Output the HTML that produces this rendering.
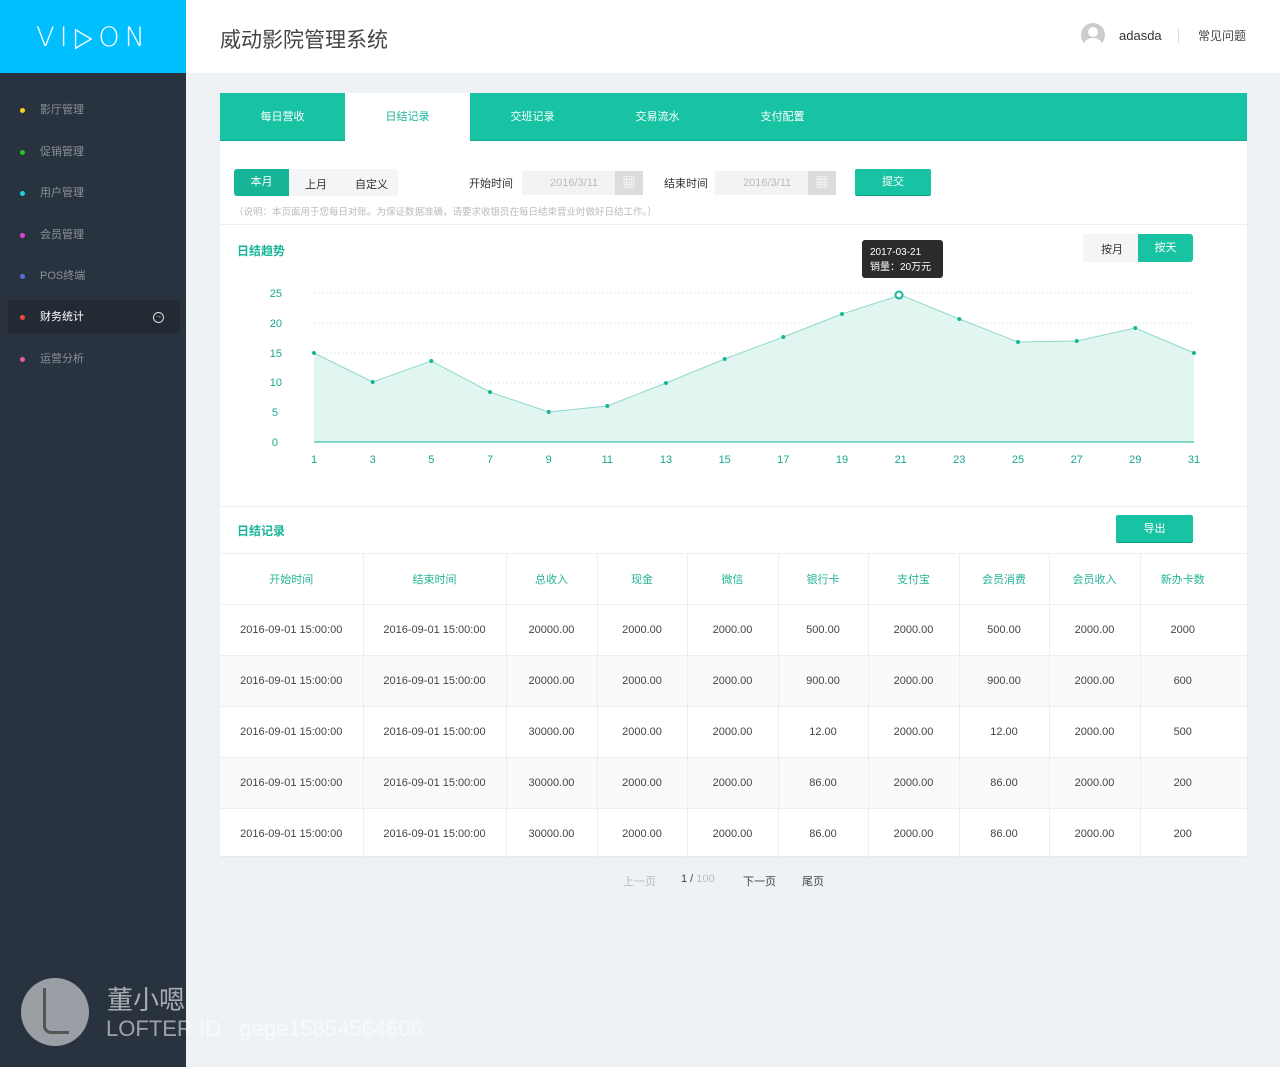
<!DOCTYPE html>
<html><head><meta charset="utf-8"><style>
*{margin:0;padding:0;box-sizing:border-box}
body{width:1280px;height:1067px;position:relative;overflow:hidden;background:#eff2f5;font-family:"Liberation Sans","Noto Sans CJK SC",sans-serif;font-size:11px;color:#333}
.a{position:absolute}
#side{left:0;top:0;width:186px;height:1067px;background:#29323f}
#logo{left:0;top:0;width:186px;height:73px;background:#00bfff;color:#fff;font-size:27px;letter-spacing:5px;text-align:center;line-height:76px;font-weight:100;font-family:"DejaVu Sans","Liberation Sans",sans-serif;-webkit-text-stroke:0}
.mi{left:0;width:186px;height:34px;line-height:34px;color:#8a929c;font-size:11px}
.mi i{position:absolute;left:20px;top:15px;width:5px;height:5px;border-radius:50%}
.mi span{position:absolute;left:40px}
#hdr{left:186px;top:0;width:1094px;height:73px;background:#fff}
.tab{top:93px;height:48px;width:125px;line-height:48px;text-align:center;color:#fff;font-size:11px}
.green{color:#17b598}
.card{background:#fff;left:220px;width:1027px}
td,th{border-right:1px solid #eee;border-bottom:1px solid #eee;text-align:center;font-weight:normal;font-size:11px}
th{color:#25b597;height:51px}
td{height:51px;color:#444}
tr:nth-child(odd) td{background:#fafafa}
tr td:last-child,tr th:last-child{border-right:none}
</style></head><body>
<div id="side" class="a"></div>
<div id="logo" class="a">VI<span style="display:inline-block;transform:scaleX(0.85)">&#9655;</span>ON</div>
<div class="a mi" style="top:93px"><i style="background:#f5d21b"></i><span>影厅管理</span></div>
<div class="a mi" style="top:135px"><i style="background:#27c32a"></i><span>促销管理</span></div>
<div class="a mi" style="top:176px"><i style="background:#1fd3e6"></i><span>用户管理</span></div>
<div class="a mi" style="top:218px"><i style="background:#e343d8"></i><span>会员管理</span></div>
<div class="a mi" style="top:259px"><i style="background:#5a6ee0"></i><span>POS终端</span></div>
<div class="a" style="left:8px;top:300px;width:172px;height:34px;background:#232a34;border-radius:3px"></div>
<div class="a mi" style="top:300px;color:#fff"><i style="background:#f24646"></i><span>财务统计</span><b style="position:absolute;left:153px;top:12px;width:11px;height:11px;border:1.3px solid #ddd;border-radius:50%;font-size:7px;line-height:8px;text-align:center;color:#ddd">&#8594;</b></div>
<div class="a mi" style="top:342px"><i style="background:#ec5aa6"></i><span>运营分析</span></div>
<div class="a" style="left:21px;top:978px;width:68px;height:68px;border-radius:50%;background:#9a9ea5"></div>
<div class="a" style="left:43px;top:988px;width:26px;height:46px;border-left:3px solid #555;border-bottom:3px solid #555;border-radius:0 0 0 8px"></div>
<div class="a" style="left:107px;top:980px;font-size:26px;color:rgba(255,255,255,.6)">董小嗯</div>
<div class="a" style="left:106px;top:1016px;font-size:22px;color:rgba(255,255,255,.55);white-space:nowrap">LOFTER ID : gege15854564606</div>

<div id="hdr" class="a"></div>
<div class="a" style="left:220px;top:24px;font-size:21px;color:#444">威动影院管理系统</div>
<div class="a" style="left:1081px;top:23px;width:24px;height:24px;border-radius:50%;background:#ccc;overflow:hidden"><div class="a" style="left:7px;top:4px;width:10px;height:10px;border-radius:50%;background:#fff"></div><div class="a" style="left:3px;top:15px;width:18px;height:14px;border-radius:50%;background:#fff"></div></div>
<div class="a" style="left:1119px;top:28px;font-size:13px;color:#333">adasda</div>
<div class="a" style="left:1178px;top:28px;width:1px;height:15px;background:#ddd"></div>
<div class="a" style="left:1198px;top:27px;font-size:12px;color:#444">常见问题</div>

<div class="a card" style="top:93px;height:763px;box-shadow:0 1px 2px rgba(0,0,0,.05)"></div>
<div class="a" style="left:220px;top:93px;width:1027px;height:48px;background:#17c3a3;border-bottom:1px solid #12a88c"></div>
<div class="a tab" style="left:220px">每日营收</div>
<div class="a tab" style="left:345px;background:#fff;color:#17b598;height:49px">日结记录</div>
<div class="a tab" style="left:470px">交班记录</div>
<div class="a tab" style="left:595px">交易流水</div>
<div class="a tab" style="left:720px">支付配置</div>

<div class="a" style="left:234px;top:169px;width:164px;height:27px;background:#f3f5f7;border-radius:3px"></div>
<div class="a" style="left:234px;top:169px;width:55px;height:27px;background:#17b598;color:#fff;line-height:27px;text-align:center;border-radius:3px 0 0 3px">本月</div>
<div class="a" style="left:305px;top:176px">上月</div>
<div class="a" style="left:355px;top:176px">自定义</div>
<div class="a" style="left:469px;top:175px">开始时间</div>
<div class="a" style="left:522px;top:171px;width:121px;height:24px;background:#f1f3f5;color:#bbb;line-height:24px;padding-left:28px">2016/3/11</div>
<div class="a" style="left:615px;top:171px;width:28px;height:24px;background:#dcdcdc;color:#fff;text-align:center;line-height:24px;font-size:13px">&#9638;</div>
<div class="a" style="left:664px;top:175px">结束时间</div>
<div class="a" style="left:715px;top:171px;width:121px;height:24px;background:#f1f3f5;color:#bbb;line-height:24px;padding-left:28px">2016/3/11</div>
<div class="a" style="left:808px;top:171px;width:28px;height:24px;background:#dcdcdc;color:#fff;text-align:center;line-height:24px;font-size:13px">&#9638;</div>
<div class="a" style="left:855px;top:169px;width:76px;height:27px;background:#17c3a3;color:#fff;text-align:center;line-height:27px;border-radius:2px;border-bottom:1px solid #109c82">提交</div>
<div class="a" style="left:234px;top:204px;font-size:9.5px;color:#bbb">（说明：本页面用于您每日对账。为保证数据准确，请要求收银员在每日结束营业时做好日结工作。）</div>
<div class="a" style="left:220px;top:224px;width:1027px;height:1px;background:#eee"></div>

<div class="a green" style="left:237px;top:242px;font-size:12px;font-weight:bold">日结趋势</div>
<div class="a" style="left:1083px;top:234px;width:110px;height:28px;background:#f3f5f7;border-radius:3px"></div>
<div class="a" style="left:1101px;top:241px">按月</div>
<div class="a" style="left:1138px;top:234px;width:55px;height:28px;background:#17c3a3;color:#fff;text-align:center;line-height:28px;border-radius:0 3px 3px 0">按天</div>

<svg class="a" style="left:0;top:0" width="1280" height="500">
<g stroke="#dfeee9" stroke-dasharray="2,2"><line x1="314" x2="1194" y1="293" y2="293"/><line x1="314" x2="1194" y1="323" y2="323"/><line x1="314" x2="1194" y1="353" y2="353"/><line x1="314" x2="1194" y1="383" y2="383"/><line x1="314" x2="1194" y1="412" y2="412"/></g>
<polygon fill="#e1f6f1" points="314,442 314,353 372.7,382 431.3,361 490,392 548.7,412 607.3,406 666,383 724.7,359 783.3,337 842,314 900.7,295 959.3,319 1018,342 1076.7,341 1135.3,328 1194,353 1194,442"/>
<polyline fill="none" stroke="#8fd9c8" stroke-width="1" points="314,353 372.7,382 431.3,361 490,392 548.7,412 607.3,406 666,383 724.7,359 783.3,337 842,314 900.7,295 959.3,319 1018,342 1076.7,341 1135.3,328 1194,353"/>
<line x1="314" x2="1194" y1="442" y2="442" stroke="#20b393"/>
<g fill="#17b598"><circle cx="314" cy="353" r="2"/><circle cx="372.7" cy="382" r="2"/><circle cx="431.3" cy="361" r="2"/><circle cx="490" cy="392" r="2"/><circle cx="548.7" cy="412" r="2"/><circle cx="607.3" cy="406" r="2"/><circle cx="666" cy="383" r="2"/><circle cx="724.7" cy="359" r="2"/><circle cx="783.3" cy="337" r="2"/><circle cx="842" cy="314" r="2"/><circle cx="959.3" cy="319" r="2"/><circle cx="1018" cy="342" r="2"/><circle cx="1076.7" cy="341" r="2"/><circle cx="1135.3" cy="328" r="2"/><circle cx="1194" cy="353" r="2"/></g>
<circle cx="899" cy="295" r="3.5" fill="#fff" stroke="#17b598" stroke-width="2"/>
<g fill="#17a88c" font-size="11" font-family="Liberation Sans" text-anchor="end"><text x="282" y="297">25</text><text x="282" y="327">20</text><text x="282" y="357">15</text><text x="282" y="386">10</text><text x="278" y="416">5</text><text x="278" y="446">0</text></g>
<g fill="#17a88c" font-size="11" font-family="Liberation Sans" text-anchor="middle"><text x="314" y="463">1</text><text x="372.7" y="463">3</text><text x="431.3" y="463">5</text><text x="490" y="463">7</text><text x="548.7" y="463">9</text><text x="607.3" y="463">11</text><text x="666" y="463">13</text><text x="724.7" y="463">15</text><text x="783.3" y="463">17</text><text x="842" y="463">19</text><text x="900.7" y="463">21</text><text x="959.3" y="463">23</text><text x="1018" y="463">25</text><text x="1076.7" y="463">27</text><text x="1135.3" y="463">29</text><text x="1194" y="463">31</text></g>
</svg>
<div class="a" style="left:862px;top:240px;width:81px;height:38px;background:#2b2b2b;border-radius:3px;color:#fff;font-size:10px;padding:5px 0 0 8px;line-height:15px">2017-03-21<br>销量：20万元</div>

<div class="a" style="left:220px;top:506px;width:1027px;height:1px;background:#eee"></div>
<div class="a green" style="left:237px;top:522px;font-size:12px;font-weight:bold">日结记录</div>
<div class="a" style="left:1116px;top:515px;width:77px;height:28px;background:#17c3a3;color:#fff;text-align:center;line-height:28px;border-radius:2px;border-bottom:1px solid #109c82">导出</div>

<table class="a" style="left:220px;top:553px;width:1027px;border-collapse:collapse;border-top:1px solid #eee;table-layout:fixed">
<colgroup><col style="width:143px"><col style="width:143px"><col style="width:91px"><col style="width:90px"><col style="width:91px"><col style="width:90px"><col style="width:91px"><col style="width:90px"><col style="width:91px"><col style="width:107px"></colgroup>
<tr><th>开始时间</th><th>结束时间</th><th>总收入</th><th>现金</th><th>微信</th><th>银行卡</th><th>支付宝</th><th>会员消费</th><th>会员收入</th><th style="padding-right:22px">新办卡数</th></tr>
<tr><td>2016-09-01 15:00:00</td><td>2016-09-01 15:00:00</td><td>20000.00</td><td>2000.00</td><td>2000.00</td><td>500.00</td><td>2000.00</td><td>500.00</td><td>2000.00</td><td style="padding-right:22px">2000</td></tr>
<tr><td>2016-09-01 15:00:00</td><td>2016-09-01 15:00:00</td><td>20000.00</td><td>2000.00</td><td>2000.00</td><td>900.00</td><td>2000.00</td><td>900.00</td><td>2000.00</td><td style="padding-right:22px">600</td></tr>
<tr><td>2016-09-01 15:00:00</td><td>2016-09-01 15:00:00</td><td>30000.00</td><td>2000.00</td><td>2000.00</td><td>12.00</td><td>2000.00</td><td>12.00</td><td>2000.00</td><td style="padding-right:22px">500</td></tr>
<tr><td>2016-09-01 15:00:00</td><td>2016-09-01 15:00:00</td><td>30000.00</td><td>2000.00</td><td>2000.00</td><td>86.00</td><td>2000.00</td><td>86.00</td><td>2000.00</td><td style="padding-right:22px">200</td></tr>
<tr><td style="border-bottom:none;height:48px">2016-09-01 15:00:00</td><td style="border-bottom:none">2016-09-01 15:00:00</td><td style="border-bottom:none">30000.00</td><td style="border-bottom:none">2000.00</td><td style="border-bottom:none">2000.00</td><td style="border-bottom:none">86.00</td><td style="border-bottom:none">2000.00</td><td style="border-bottom:none">86.00</td><td style="border-bottom:none">2000.00</td><td style="border-bottom:none;padding-right:22px">200</td></tr>
</table>

<div class="a" style="left:623px;top:873px;color:#bbb">上一页</div>
<div class="a" style="left:681px;top:873px;color:#444">1 / <span style="color:#bbb">100</span></div>
<div class="a" style="left:743px;top:873px;color:#444">下一页</div>
<div class="a" style="left:802px;top:873px;color:#444">尾页</div>
</body></html>
